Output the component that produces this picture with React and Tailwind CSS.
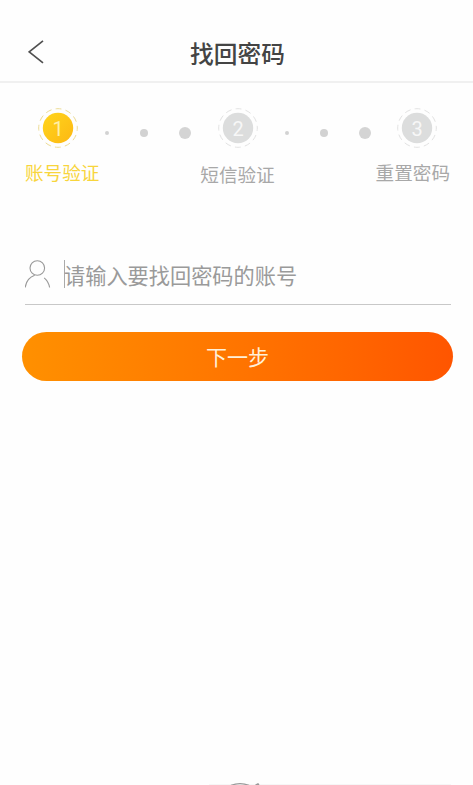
import { useState } from "react";
import clsx from "clsx";

const steps = [
  { id: 1, label: "账号验证" },
  { id: 2, label: "短信验证" },
  { id: 3, label: "重置密码" },
];

function StepBadge({ number, active }) {
  return (
    <svg width="40" height="40" viewBox="0 0 40 40" className="shrink-0">
      <defs>
        <linearGradient id="activeStep" x1="0" y1="0" x2="1" y2="1">
          <stop offset="0" stopColor="#ffd51c" />
          <stop offset="1" stopColor="#fdb813" />
        </linearGradient>
      </defs>
      <circle
        cx="20"
        cy="20"
        r="19.3"
        fill="none"
        stroke={active ? "#ecdb94" : "#e2e2e2"}
        strokeWidth="1"
        strokeDasharray="6 4.1"
        strokeDashoffset="3"
      />
      <circle cx="20" cy="20" r="15.2" fill={active ? "url(#activeStep)" : "#dcdddd"} />
      <text
        x="20"
        y="27.5"
        textAnchor="middle"
        fontSize="20"
        fill={active ? "#fff0a8" : "#f7f7f7"}
        className="font-['Roboto',sans-serif]"
      >
        {number}
      </text>
    </svg>
  );
}

// Three dots growing towards the next step
function Dots() {
  return (
    <div className="flex flex-1 items-center pl-[27px] pt-[9px]">
      <span className="size-1 rounded-full bg-[#d2d2d2]" />
      <span className="ml-[31px] size-2 rounded-full bg-[#d2d2d2]" />
      <span className="ml-[31px] size-3 rounded-full bg-[#d4d4d4]" />
    </div>
  );
}

export default function App() {
  const [account, setAccount] = useState("");

  return (
    <div className="flex h-[785px] w-[473px] flex-col overflow-hidden bg-[#fefefe] font-['Noto_Sans_CJK_SC',sans-serif]">
      {/* Header */}
      <header className="grid h-[83px] shrink-0 grid-cols-[81px_1fr_79px] items-center border-b-2 border-[#f0f0f0] pt-[27px]">
        <button className="pl-7">
          <svg width="16" height="24" viewBox="0 0 16 24" className="mb-[5px]" fill="none" stroke="#505050" strokeWidth="1.7">
            <path d="M15 .8 1.2 11.8 15 22.8" />
          </svg>
        </button>
        <h1 className="text-center text-[23.7px] leading-none font-medium text-[#444]">
          找回密码
        </h1>
      </header>

      {/* Steps */}
      <section className="h-[177px] shrink-0 pt-[25px]">
        <div className="flex items-center pr-9 pl-[38px]">
          <StepBadge number={1} active />
          <Dots />
          <StepBadge number={2} />
          <Dots />
          <StepBadge number={3} />
        </div>
        <div className="mt-[15px] flex justify-between pr-[23px] pl-[25px]">
          {steps.map((step) => (
            <span
              key={step.id}
              className={clsx(
                "text-[18.6px] leading-none",
                step.id === 1 ? "text-[#f8d53c]" : "text-[#a8a8a8]",
                step.id === 2 && "pt-0.5"
              )}
            >
              {step.label}
            </span>
          ))}
        </div>
      </section>

      {/* Account input */}
      <div className="mr-[22px] ml-[25px] flex h-[45px] shrink-0 items-start border-b border-[#c8c8c8]">
        <svg width="26" height="29" viewBox="1 0 26 29" fill="none" stroke="#999" strokeWidth="1.1">
          <circle cx="13.3" cy="8" r="7.3" />
          <path d="M1.2 27.5C2 21.8 5.6 17 10.7 15.2M20.2 17.8C23 20.2 25 23.5 25.6 27.5" />
        </svg>
        <span className="ml-[13px] h-7 w-px bg-[#aaa]" />
        <input
          type="text"
          value={account}
          onChange={(e) => setAccount(e.target.value)}
          placeholder="请输入要找回密码的账号"
          className="-ml-px h-[30px] flex-1 text-[21.2px] text-gray-700 outline-none placeholder:text-[#9a9a9a]"
        />
      </div>

      {/* Submit */}
      <button className="mr-5 ml-[22px] mt-[27px] h-[49px] shrink-0 rounded-full bg-linear-to-r from-[#ff9000] to-[#ff5500] text-[21px] leading-none text-[#fff0d8]">
        下一步
      </button>

      {/* Top edge of the footer mark, cut off by the screen */}
      <div className="mt-auto ml-[209px] flex h-[2px] w-[242px] border-b border-[#f6f6f6]">
        <svg width="60" height="2" viewBox="0 0 60 2" fill="none" stroke="#999" strokeWidth="1.2">
          <path d="M22 2.4Q31-1 40 2.4M46.5 2 49 .8 50 2" />
        </svg>
      </div>
    </div>
  );
}
